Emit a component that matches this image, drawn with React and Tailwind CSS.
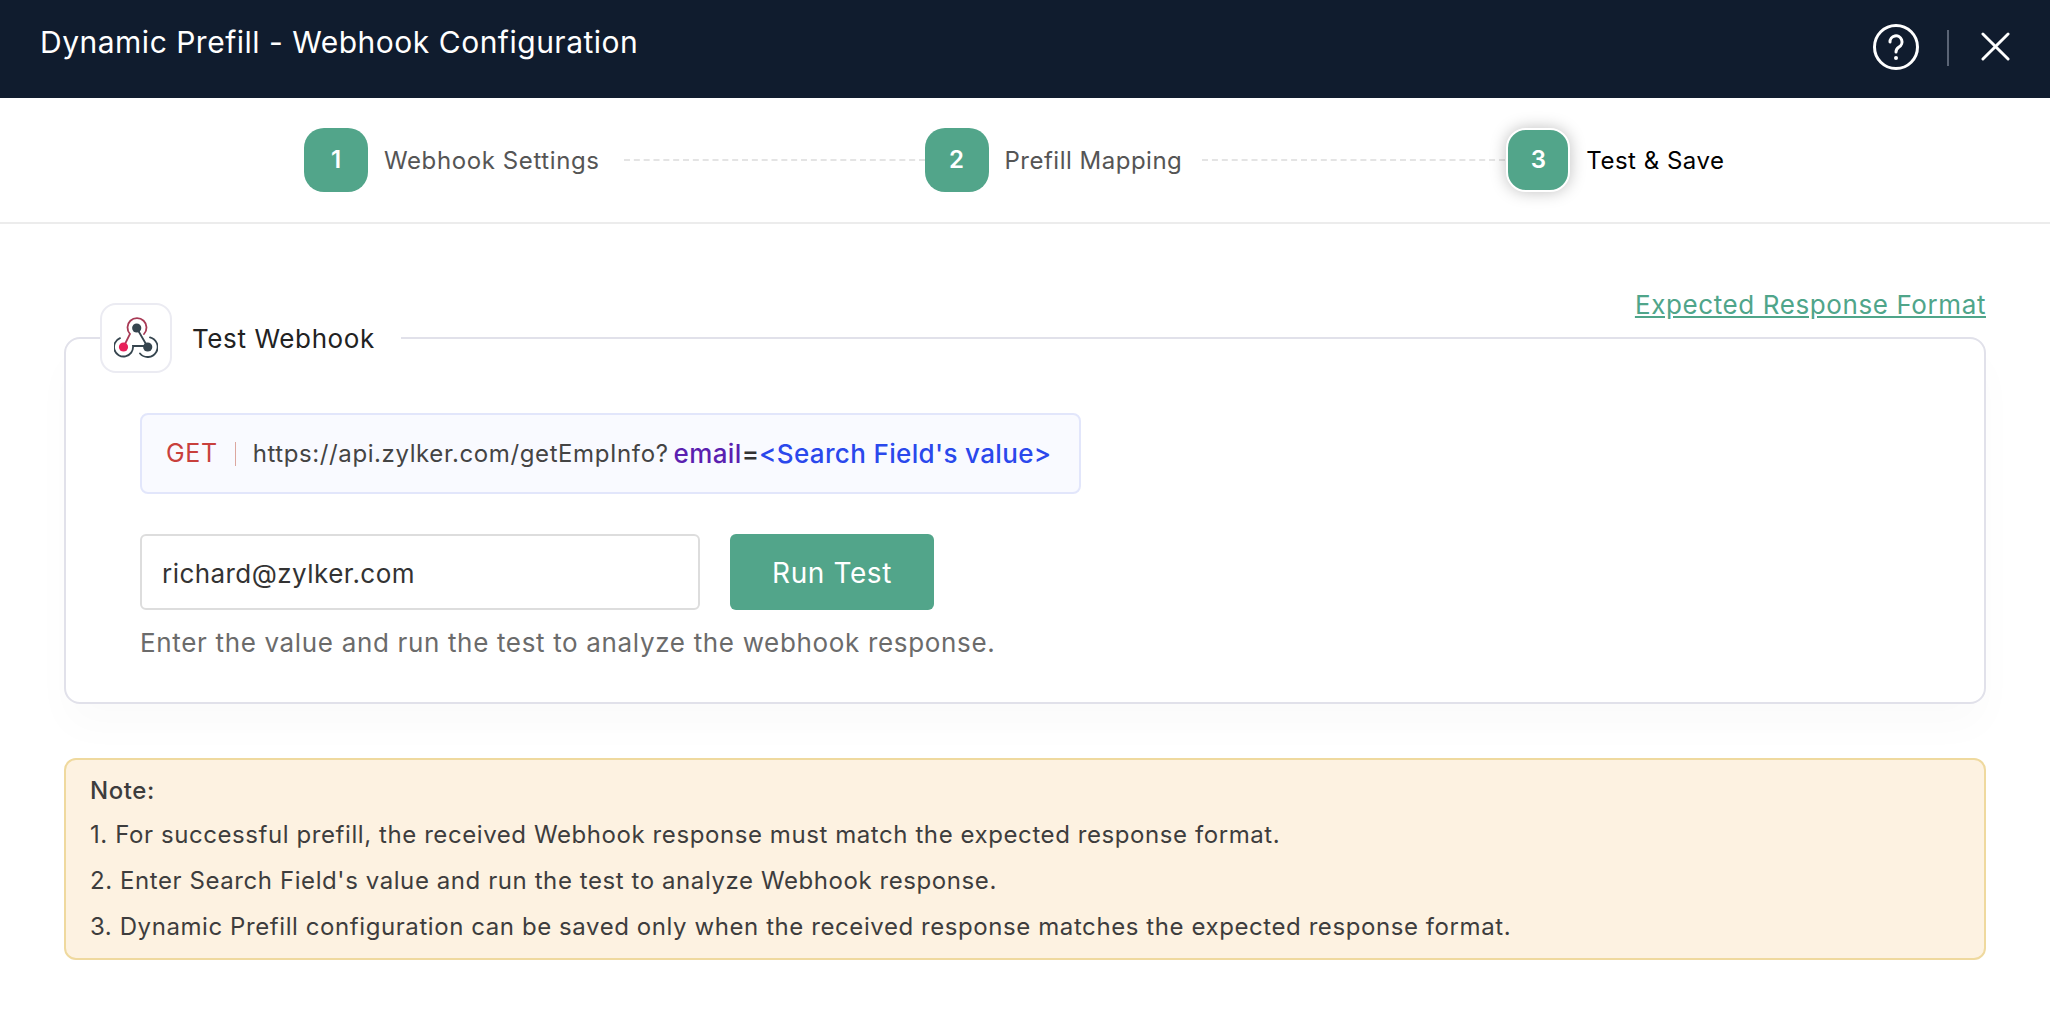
import React from 'react';

function Step({ n, label, active, labelClass }) {
  return (
    <div className="flex items-center shrink-0">
      {active ? (
        <div className="w-[64px] h-[64px] rounded-[20px] bg-[#52a58a] border-2 border-white shadow-[0_0_16px_rgba(0,0,0,0.25)] flex items-center justify-center text-white text-[24px] font-semibold">
          {n}
        </div>
      ) : (
        <div className="w-[64px] h-[64px] rounded-[20px] bg-[#52a58a] flex items-center justify-center text-white text-[24px] font-semibold">
          {n}
        </div>
      )}
      <span className={labelClass}>{label}</span>
    </div>
  );
}

function WebhookIcon() {
  return (
    <svg width="44" height="42" viewBox="0 0 44 42" fill="none">
      {/* crimson strand */}
      <path d="M9.5 30 L16 17 A9.5 9.5 0 1 1 30 17" stroke="#a83a55" strokeWidth="1.8" strokeLinecap="round" />
      {/* left arc + bar */}
      <path d="M6 21.2 A9.5 9.5 0 1 0 19 29 L33 29" stroke="#36454f" strokeWidth="1.8" strokeLinecap="round" />
      {/* right arc + spoke */}
      <path d="M22.7 11 L33.7 30 M26 36.5 A10 10 0 1 0 36 20.3" stroke="#36454f" strokeWidth="1.8" strokeLinecap="round" />
      <circle cx="22.7" cy="11" r="4.6" fill="#36454f" />
      <circle cx="33.7" cy="30" r="4.6" fill="#36454f" />
      <circle cx="9.5" cy="30" r="4.6" fill="#e8205a" />
    </svg>
  );
}

export default function App() {
  return (
    <div className="w-[2050px] h-[1014px] bg-white overflow-hidden font-['Inter',sans-serif] [font-optical-sizing:none]">
      <header className="h-[98px] bg-[#101c2e] flex items-center justify-between pl-[40px] pr-[40px]">
        <h1 className="text-white text-[30px] font-normal tracking-[0.5px] -mt-[14px]">Dynamic Prefill - Webhook Configuration</h1>
        <div className="flex items-center -mt-[5px]">
          <svg width="46" height="46" viewBox="0 0 46 46" fill="none">
            <circle cx="23" cy="23" r="21.5" stroke="white" strokeWidth="3" />
            <path d="M17 18 A6 6 0 1 1 26 23 C24 24.3 23 25.3 23 28" stroke="white" strokeWidth="3" strokeLinecap="round" />
            <circle cx="23" cy="34" r="2" fill="white" />
          </svg>
          <div className="w-[2px] h-[36px] mt-[3px] bg-[#5a6475] ml-[28px] mr-[32px]" />
          <svg width="29" height="29" viewBox="0 0 30 30" fill="none">
            <path d="M2 2 L28 28 M28 2 L2 28" stroke="white" strokeWidth="3" strokeLinecap="round" />
          </svg>
        </div>
      </header>

      <nav className="h-[126px] border-b-2 border-[#ececec] flex items-center pl-[304px]">
        <Step n="1" label="Webhook Settings" labelClass="ml-[16px] mt-[2px] text-[24px] text-[#555555] tracking-[0.6px]" />
        <div className="w-[301px] ml-[24px] border-t-2 border-dashed border-[#e4e4e4]" />
        <Step n="2" label="Prefill Mapping" labelClass="ml-[16px] mt-[2px] text-[24px] text-[#555555] tracking-[0.5px]" />
        <div className="w-[303px] ml-[20px] mr-[1px] border-t-2 border-dashed border-[#e4e4e4]" />
        <Step n="3" label="Test & Save" active labelClass="ml-[16px] mt-[2px] text-[24px] text-black tracking-[0.5px]" />
      </nav>

      <main className="px-[64px]">
        <div className="relative mt-[113px] h-[367px] border-2 border-[#e1e1ea] rounded-[16px] bg-white shadow-[0_24px_40px_rgba(0,0,0,0.02)] pl-[74px] pt-[74px]">
          <div className="absolute left-[34px] -top-[36px] flex items-center bg-white pr-[26px]">
            <div className="w-[72px] h-[70px] bg-white border-2 border-[#ebebf2] rounded-[16px] flex items-center justify-center">
              <WebhookIcon />
            </div>
            <span className="ml-[20px] text-[26px] text-[#222222] tracking-[0.6px]">Test Webhook</span>
          </div>
          <a className="absolute -right-[2px] -top-[54px] text-[26px] text-[#4fa58a] underline tracking-[0.6px]">Expected Response Format</a>

          <div className="w-[941px] h-[81px] border-2 border-[#e2e6fb] rounded-[8px] bg-[#f9faff] flex items-center pl-[24px]">
            <span className="text-[25px] tracking-[0.6px] text-[#c8403c]">GET</span>
            <span className="w-[1px] h-[24px] bg-[#dca79f] mx-[17px]" />
            <span className="text-[24px] tracking-[0.6px] text-[#444444]">https://api.zylker.com/getEmpInfo?</span>
            <span className="ml-[5px] text-[26px] font-[550] tracking-[0.4px] text-[#5b1fb0]">email</span>
            <span className="text-[26px] font-[550] text-[#333333]">=</span>
            <span className="text-[26px] font-[550] tracking-[0.35px] text-[#2a48ec]">{"<Search Field's value>"}</span>
          </div>

          <div className="flex mt-[40px]">
            <div className="w-[560px] h-[76px] border-2 border-[#dddddd] rounded-[6px] flex items-center pl-[20px] pt-[2px] text-[26px] tracking-[0.45px] text-[#333333]">richard@zylker.com</div>
            <button className="ml-[30px] w-[204px] h-[76px] rounded-[6px] bg-[#52a58a] text-white pt-[2px] text-[28px] font-normal tracking-[0.6px]">Run Test</button>
          </div>
          <p className="mt-[13px] text-[26px] text-[#6b6b6b] tracking-[0.66px]">Enter the value and run the test to analyze the webhook response.</p>
        </div>

        <div className="mt-[54px] h-[202px] border-2 border-[#efd99e] rounded-[12px] bg-[#fdf2e1] pl-[24px] pt-[15px] text-[24px] text-[#3d3d3d] tracking-[0.58px]">
          <p className="font-medium h-[44px] leading-[32px]">Note:</p>
          <p className="h-[46px] leading-[32px]">1. For successful prefill, the received Webhook response must match the expected response format.</p>
          <p className="h-[46px] leading-[32px]">2. Enter Search Field's value and run the test to analyze Webhook response.</p>
          <p className="h-[46px] leading-[32px]">3. Dynamic Prefill configuration can be saved only when the received response matches the expected response format.</p>
        </div>
      </main>
    </div>
  );
}
